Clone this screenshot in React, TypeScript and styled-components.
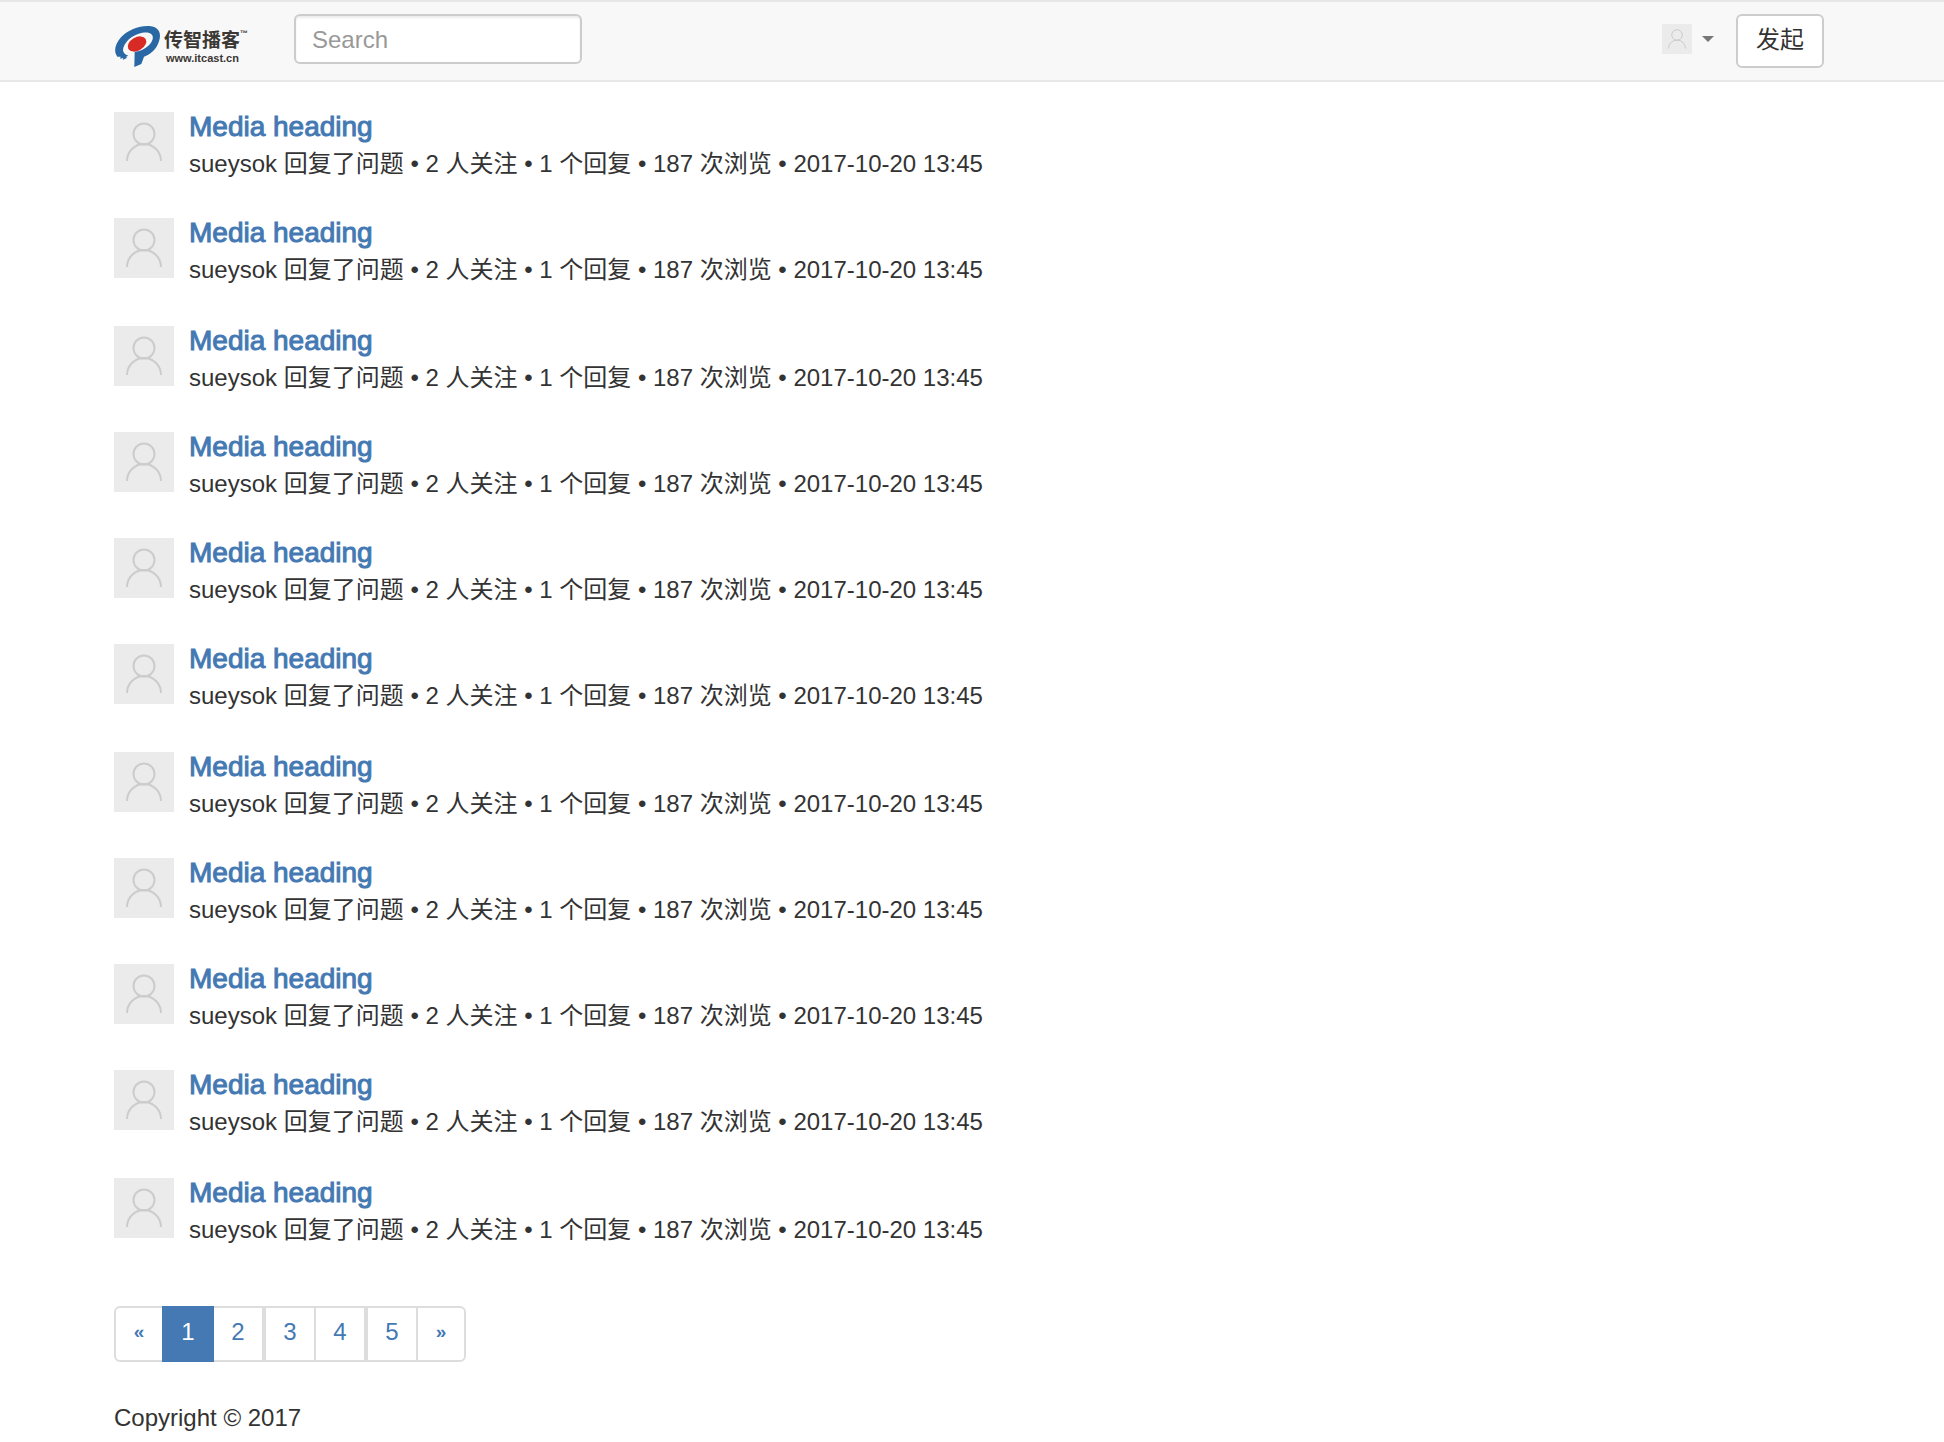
import React from "react";
import styled, { createGlobalStyle } from "styled-components";

const sans = '"Liberation Sans", "Noto Sans CJK SC", sans-serif';

const GlobalStyle = createGlobalStyle`
  *, *::before, *::after { box-sizing: border-box; }
  body {
    margin: 0;
    background: #fff;
    color: #333;
    font-family: ${sans};
    font-size: 24px;
    line-height: 34px;
  }
  button, input { font: inherit; color: inherit; }
  a { color: #4479b3; text-decoration: none; }
`;

const Navbar = styled.header`
  border-top: 2px solid #e7e7e7;
  border-bottom: 2px solid #e7e7e7;
  background: #f8f8f8;
`;

const Container = styled.div`
  padding: 0 120px 0 114px;
`;

const NavRow = styled(Container)`
  display: flex;
  align-items: flex-start;
  padding-top: 12px;
  padding-bottom: 12px;
`;

const Brand = styled.a`
  display: flex;
  width: 180px;
  padding-top: 10px;
  gap: 3px;
  color: #3a3734;
`;

const Mark = styled.svg`
  flex: none;
  width: 47px;
  height: 44px;
`;

const Wordmark = styled.span`
  display: flex;
  flex-direction: column;
  padding-top: 5px;
  font-weight: 700;
`;

const BrandName = styled.span`
  display: flex;
  font-size: 19px;
  line-height: 24px;
`;

const Trademark = styled.span`
  font-size: 8px;
  line-height: 10px;
`;

const BrandSite = styled.span`
  padding-left: 2px;
  font-size: 11px;
  line-height: 10px;
`;

const SearchBox = styled.input`
  width: 288px;
  height: 50px;
  padding: 8px 16px 6px;
  border: 2px solid #ccc;
  border-radius: 6px;
  background: #fff;
  box-shadow: inset 0 2px 2px rgba(0, 0, 0, 0.075);
  &::placeholder { color: #999; opacity: 1; }
`;

const NavActions = styled.div`
  display: flex;
  align-items: flex-start;
  gap: 22px;
  margin-left: auto;
`;

const UserMenu = styled.button`
  display: flex;
  align-items: center;
  gap: 10px;
  padding: 10px 0 0;
  border: 0;
  background: none;
`;

const Caret = styled.span`
  border: 6px solid transparent;
  border-top-color: #777;
  border-bottom: 0;
`;

const PostButton = styled.button`
  padding: 7px 18px 9px;
  border: 2px solid #ccc;
  border-radius: 6px;
  background: #fff;
`;

const AvatarBox = styled.svg<{ $size: number }>`
  display: block;
  flex: none;
  width: ${(p) => p.$size}px;
  height: ${(p) => p.$size}px;
  background: #ebebeb;
`;

const List = styled.ul`
  margin: 30px 0 59px;
  padding: 0;
  list-style: none;
`;

const Item = styled.li`
  display: flex;
  gap: 15px;
  margin-bottom: 37px;
  &:nth-child(4n + 2) { margin-bottom: 39px; }
  &:last-child { margin-bottom: 0; }
`;

const Heading = styled.h4`
  margin: 0 0 5px;
  font-size: 28px;
  line-height: 30px;
  font-weight: 400;
  -webkit-text-stroke: 1px #4479b3;
`;

const Meta = styled.p`
  margin: 0;
`;

const Pager = styled.ul`
  display: flex;
  margin: 0 0 39px;
  padding: 0;
  list-style: none;
`;

const PageItem = styled.li`
  & + & { margin-left: -2px; }
  & + &:nth-child(2n + 4) { margin-left: 0; }
  &:first-child a, &:last-child a { width: 50px; font-size: 19px; font-weight: 700; }
  &:first-child a { border-radius: 6px 0 0 6px; }
  &:last-child a { border-radius: 0 6px 6px 0; }
`;

const PageLink = styled.a<{ $active?: boolean }>`
  display: block;
  position: relative;
  z-index: ${(p) => (p.$active ? 1 : 0)};
  width: 52px;
  padding: 7px 0 11px;
  border: 2px solid ${(p) => (p.$active ? "#4479b3" : "#ddd")};
  background: ${(p) => (p.$active ? "#4479b3" : "#fff")};
  color: ${(p) => (p.$active ? "#fff" : "#4479b3")};
  text-align: center;
`;

const Footer = styled.footer`
  padding-bottom: 7px;
`;

function Avatar({ size }: { size: number }) {
  return (
    <AvatarBox $size={size} viewBox="0 0 60 60" fill="none" stroke="#ccc" strokeWidth="2" aria-hidden="true">
      <circle cx="30" cy="22" r="10.5" />
      <path d="M13 49a17 17 0 0 1 34 0" />
    </AvatarBox>
  );
}

function Logo() {
  return (
    <Mark viewBox="42 72 141 132" aria-hidden="true">
      <path
        fill="#2968a5"
        d="M68 180L70 174L60 176L62 170L52 170C40 154 45 132 63 112C84 89 118 76 149 78C177 81 185 99 177 124C169 149 151 164 132 170L124 192L103 201L104 156C133 152 154 134 158 117C161 101 148 95 127 98C97 103 69 128 69 151C70 158 75 164 85 167L77 171L82 173Z"
      />
      <ellipse cx="111" cy="132" rx="30" ry="20" fill="#d92b26" transform="rotate(-30 111 132)" />
    </Mark>
  );
}

const posts = Array.from({ length: 11 }, (_, id) => ({
  id,
  title: "Media heading",
  meta: "sueysok 回复了问题 • 2 人关注 • 1 个回复 • 187 次浏览 • 2017-10-20 13:45",
}));

const pages = ["«", "1", "2", "3", "4", "5", "»"];

export default function App() {
  return (
    <>
      <GlobalStyle />
      <Navbar>
        <NavRow>
          <Brand href="#">
            <Logo />
            <Wordmark>
              <BrandName>
                传智播客<Trademark>™</Trademark>
              </BrandName>
              <BrandSite>www.itcast.cn</BrandSite>
            </Wordmark>
          </Brand>
          <SearchBox type="text" placeholder="Search" aria-label="Search" />
          <NavActions>
            <UserMenu type="button" aria-label="User menu">
              <Avatar size={30} />
              <Caret />
            </UserMenu>
            <PostButton type="button">发起</PostButton>
          </NavActions>
        </NavRow>
      </Navbar>
      <Container>
        <List>
          {posts.map((post) => (
            <Item key={post.id}>
              <Avatar size={60} />
              <div>
                <Heading>
                  <a href="#">{post.title}</a>
                </Heading>
                <Meta>{post.meta}</Meta>
              </div>
            </Item>
          ))}
        </List>
        <nav aria-label="Pagination">
          <Pager>
            {pages.map((label) => (
              <PageItem key={label}>
                <PageLink href="#" $active={label === "1"}>
                  {label}
                </PageLink>
              </PageItem>
            ))}
          </Pager>
        </nav>
        <Footer>Copyright © 2017</Footer>
      </Container>
    </>
  );
}
